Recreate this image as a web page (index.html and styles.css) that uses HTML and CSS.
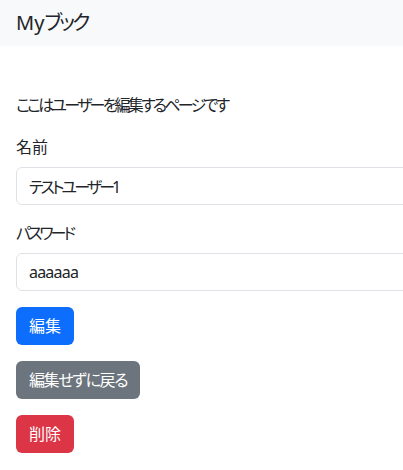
FILE: index.html
```html
<!DOCTYPE html>
<html lang="ja">
<head>
<meta charset="utf-8">
<link rel="stylesheet" href="styles.css">
</head>
<body>
<nav class="navbar">
  <span class="brand">My<span class="kana-tight">ブック</span></span>
</nav>
<main class="content">
  <p class="lead-text">ここはユーザーを編集するページです</p>
  <form class="form">
    <div class="field">
      <label class="label">名前</label>
      <input class="input input-kana" type="text" value="テストユーザー1">
    </div>
    <div class="field">
      <label class="label label-kana">パスワード</label>
      <input class="input input-latin" type="text" value="aaaaaa">
    </div>
    <div class="actions">
      <button type="button" class="btn btn-primary">編集</button>
      <button type="button" class="btn btn-secondary">編集せずに戻る</button>
      <button type="button" class="btn btn-danger">削除</button>
    </div>
  </form>
</main>
</body>
</html>
```

FILE: styles.css
```css
html, body {
  margin: 0;
  padding: 0;
  overflow: hidden;
}
body {
  font-family: "Noto Sans", "Noto Sans CJK JP", sans-serif;
  font-feature-settings: "palt";
  font-size: 16px;
  line-height: 24px;
  color: #212529;
  background: #fff;
}
.navbar {
  background: #f8f9fa;
  padding: 8px 16px;
  height: 30px;
  display: flex;
  align-items: center;
}
.brand {
  font-size: 20px;
  line-height: 30px;
}
.kana-tight {
  letter-spacing: -2.6px;
}
.content {
  padding: 47px 16px 0;
}
.lead-text {
  margin: 0 0 18px;
  letter-spacing: -2.75px;
}
.form {
  display: flex;
  flex-direction: column;
  gap: 16px;
}
.field {
  display: flex;
  flex-direction: column;
  gap: 8px;
}
.label {
  display: block;
}
.label-kana {
  letter-spacing: -3px;
}
.input {
  box-sizing: border-box;
  width: 420px;
  height: 38px;
  padding: 6px 12px;
  font: inherit;
  font-feature-settings: "palt";
  color: #212529;
  border: 1px solid #dee2e6;
  border-radius: 6px;
  background: #fff;
}
.input-kana {
  letter-spacing: -2.9px;
}
.input-latin {
  letter-spacing: -0.8px;
}
.actions {
  display: flex;
  flex-direction: column;
  align-items: flex-start;
  gap: 16px;
}
.btn {
  box-sizing: border-box;
  height: 38px;
  padding: 6px 12px;
  font: inherit;
  font-feature-settings: "palt";
  color: #fff;
  border: 1px solid transparent;
  border-radius: 6px;
}
.btn-primary { background: #0d6efd; }
.btn-secondary {
  background: #6c757d;
  letter-spacing: -1.4px;
}
.btn-danger { background: #dc3545; }
```
